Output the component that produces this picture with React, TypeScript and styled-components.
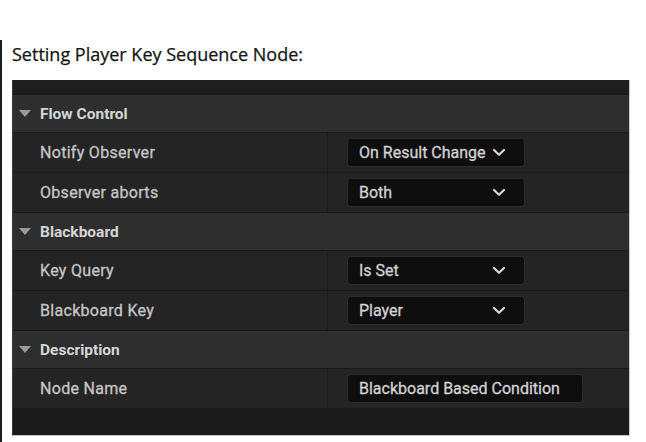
import styled, { createGlobalStyle } from "styled-components";

const GlobalStyle = createGlobalStyle`
    html, body {
        margin: 0;
        padding: 0;
        background: #ffffff;
    }
`;

const Page = styled.div`
    width: 646px;
    box-sizing: border-box;
    border-left: 2px solid #1b1f23;
    margin-top: 40px;
    height: 402px;
    padding-left: 10px;
    font-family: "Open Sans", "Noto Sans", sans-serif;
`;

const Title = styled.h3`
    margin: 0;
    padding-top: 2px;
    height: 38px;
    font-size: 18px;
    font-weight: 400;
    color: #141414;
    -webkit-text-stroke: 0.25px #141414;
`;

const Panel = styled.div`
    width: 618px;
    background: #1b1b1b;
    border-right: 1px solid #c9c9c9;
    border-bottom: 1px solid #c9c9c9;
    border-left: 1px solid #3a3a3a;
    box-sizing: border-box;
    font-family: Roboto, "Liberation Sans", sans-serif;
`;

const TopStrip = styled.div`
    height: 14px;
    background: #1e1e1e;
    border-bottom: 1px solid #161616;
`;

const Header = styled.div`
    display: flex;
    align-items: center;
    height: 37px;
    padding-left: 6px;
    background: #2e2e2e;
    border-bottom: 1px solid #1a1a1a;
    color: #d6d6d6;
    font-weight: 700;
    font-size: 15.5px;
`;

const Caret = styled.span`
    width: 0;
    height: 0;
    border-left: 6px solid transparent;
    border-right: 6px solid transparent;
    border-top: 7px solid #9a9a9a;
    margin-right: 9px;
`;

const Row = styled.div`
    display: grid;
    grid-template-columns: 315px 1fr;
    height: 39px;
    background: #242424;
    border-bottom: 1px solid #1a1a1a;
`;

const Label = styled.div`
    display: flex;
    align-items: center;
    padding-left: 27px;
    color: #c6c6c6;
    font-size: 16px;
    letter-spacing: 0.3px;
    -webkit-text-stroke: 0.3px #c6c6c6;
    border-right: 1px solid #1c1c1c;
`;

const Value = styled.div`
    display: flex;
    align-items: center;
    padding-left: 19px;
`;

const Field = styled.div<{ $w: number }>`
    display: flex;
    align-items: center;
    justify-content: space-between;
    box-sizing: border-box;
    width: ${(p) => p.$w}px;
    height: 29px;
    padding: 0 18px 0 11px;
    background: #0e0e0e;
    border: 1px solid #2c2c2c;
    border-radius: 4px;
    color: #d2d2d2;
    font-size: 16px;
    -webkit-text-stroke: 0.3px #d2d2d2;
    white-space: nowrap;
`;

const Chevron = () => (
    <svg width="14" height="9" viewBox="0 0 14 9">
        <path d="M2 2 L7 6.8 L12 2" fill="none" stroke="#d8d8d8" strokeWidth="2.2" strokeLinecap="round" strokeLinejoin="round" />
    </svg>
);

const Footer = styled.div`
    height: 26px;
    background: #1a1a1a;
`;

type Prop = { label: string; value: string; dropdown?: boolean; width?: number };

const sections: { title: string; props: Prop[] }[] = [
    {
        title: "Flow Control",
        props: [
            { label: "Notify Observer", value: "On Result Change", dropdown: true },
            { label: "Observer aborts", value: "Both", dropdown: true },
        ],
    },
    {
        title: "Blackboard",
        props: [
            { label: "Key Query", value: "Is Set", dropdown: true },
            { label: "Blackboard Key", value: "Player", dropdown: true },
        ],
    },
    {
        title: "Description",
        props: [{ label: "Node Name", value: "Blackboard Based Condition", width: 236 }],
    },
];

const App = () => {
    return (
        <>
            <GlobalStyle />
            <Page>
                <Title>Setting Player Key Sequence Node:</Title>
                <Panel>
                    <TopStrip />
                    {sections.map((s) => (
                        <div key={s.title}>
                            <Header>
                                <Caret />
                                {s.title}
                            </Header>
                            {s.props.map((p) => (
                                <Row key={p.label}>
                                    <Label>{p.label}</Label>
                                    <Value>
                                        <Field $w={p.width ?? 178}>
                                            {p.value}
                                            {p.dropdown ? <Chevron /> : null}
                                        </Field>
                                    </Value>
                                </Row>
                            ))}
                        </div>
                    ))}
                    <Footer />
                </Panel>
            </Page>
        </>
    );
};

export default App;
